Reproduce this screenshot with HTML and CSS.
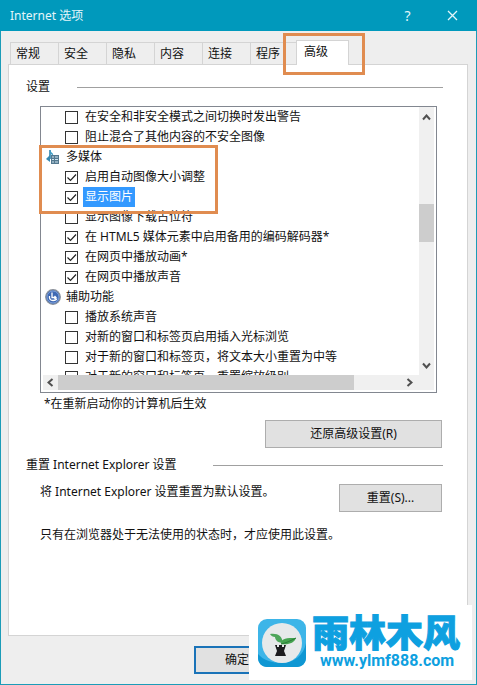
FILE: index.html
```html
<!DOCTYPE html>
<html lang="zh-CN">
<head>
    <meta charset="UTF-8">
    <meta name="viewport" content="width=device-width, initial-scale=1.0">
    <title>Internet 选项</title>
    <link rel="stylesheet" href="styles.css">
</head>
<body>
    <div class="window">
        <header class="titlebar">
            <h1>Internet 选项</h1>
            <button class="title-btn" aria-label="帮助">?</button>
            <button class="title-btn" aria-label="关闭">
                <svg width="11" height="11" viewBox="0 0 11 11"><path d="M1 1l9 9M10 1l-9 9" stroke="#e4f6fa" stroke-width="1.3" fill="none"/></svg>
            </button>
        </header>

        <nav class="tabs" role="tablist">
            <button class="tab" role="tab">常规</button>
            <button class="tab" role="tab">安全</button>
            <button class="tab" role="tab">隐私</button>
            <button class="tab" role="tab">内容</button>
            <button class="tab" role="tab">连接</button>
            <button class="tab" role="tab">程序</button>
            <button class="tab active" role="tab" aria-selected="true">高级</button>
            <span class="mark mark-tab"></span>
        </nav>

        <main class="panel">
            <h2 class="group-title first">设置</h2>

            <div class="listbox">
                <div class="rows">
                    <label class="row"><input type="checkbox"><span>在安全和非安全模式之间切换时发出警告</span></label>
                    <label class="row"><input type="checkbox"><span>阻止混合了其他内容的不安全图像</span></label>
                    <div class="row category">
                        <svg width="14" height="14" viewBox="0 0 14 14">
                            <path d="M4 0v9" stroke="#2b82ad" stroke-width="1.6" fill="none"/>
                            <path d="M4 0c1 3 4 3 3 6-1-2-3-2-3-3z" fill="#3d9cc4"/>
                            <path d="M0 9l4-4v7z" fill="#3487b0"/>
                            <rect x="5" y="5" width="8" height="9" fill="#54788f"/>
                            <path d="M6 7h2M9 7h3M6 9.500h2M9 9.500h3M6 12h2M9 12h3" stroke="#cfe6f2" stroke-width="1.2"/>
                        </svg>
                        <span>多媒体</span>
                    </div>
                    <label class="row"><input type="checkbox" checked><span>启用自动图像大小调整</span></label>
                    <label class="row selected"><input type="checkbox" checked><span>显示图片</span></label>
                    <label class="row"><input type="checkbox"><span>显示图像下载占位符</span></label>
                    <label class="row"><input type="checkbox" checked><span>在 HTML5 媒体元素中启用备用的编码解码器*</span></label>
                    <label class="row"><input type="checkbox" checked><span>在网页中播放动画*</span></label>
                    <label class="row"><input type="checkbox" checked><span>在网页中播放声音</span></label>
                    <div class="row category">
                        <svg width="16" height="16" viewBox="0 0 16 16">
                            <circle cx="8" cy="8" r="7.3" fill="#3f69b3" stroke="#8a9099" stroke-width="1.2"/>
                            <circle cx="8" cy="8" r="6" fill="none" stroke="#8fb0e4" stroke-width=".8"/>
                            <path d="M7 3.500v5h4M9.500 7l1.500 1.500-1.500 1.500M4.500 7c-.5 3 1 4.500 3.500 4.500s3.500-.8 3.800-2" stroke="#fff" stroke-width="1.3" fill="none"/>
                        </svg>
                        <span>辅助功能</span>
                    </div>
                    <label class="row"><input type="checkbox"><span>播放系统声音</span></label>
                    <label class="row"><input type="checkbox"><span>对新的窗口和标签页启用插入光标浏览</span></label>
                    <label class="row"><input type="checkbox"><span>对于新的窗口和标签页，将文本大小重置为中等</span></label>
                    <label class="row"><input type="checkbox"><span>对于新的窗口和标签页，重置缩放级别</span></label>
                </div>
                <div class="vscroll">
                    <button aria-label="向上滚动"><svg width="9" height="7" viewBox="0 0 9 7"><path d="M1 5.500l3.500-4 3.500 4" /></svg></button>
                    <div class="vtrack"><div class="vthumb"></div></div>
                    <button aria-label="向下滚动"><svg width="9" height="7" viewBox="0 0 9 7"><path d="M1 1.500l3.500 4 3.500-4" /></svg></button>
                </div>
                <div class="hscroll">
                    <button aria-label="向左滚动"><svg width="7" height="9" viewBox="0 0 7 9"><path d="M5.500 1l-4 3.500 4 3.500" /></svg></button>
                    <div class="htrack"><div class="hthumb"></div></div>
                    <button aria-label="向右滚动"><svg width="7" height="9" viewBox="0 0 7 9"><path d="M1.500 1l4 3.500-4 3.500" /></svg></button>
                </div>
                <span class="mark mark-rows"></span>
            </div>

            <p class="note">*在重新启动你的计算机后生效</p>
            <div class="restore">
                <button class="btn btn-wide">还原高级设置(R)</button>
            </div>

            <h2 class="group-title second">重置 Internet Explorer 设置</h2>
            <div class="reset">
                <p>将 Internet Explorer 设置重置为默认设置。</p>
                <button class="btn">重置(S)...</button>
            </div>
            <p class="hint">只有在浏览器处于无法使用的状态时，才应使用此设置。</p>
        </main>

        <footer class="actions">
            <button class="btn btn-ok">确定</button>
        </footer>

        <div class="watermark">
            <svg width="48" height="48" viewBox="0 0 48 48">
                <rect width="48" height="48" rx="9" fill="#3db5e8"/>
                <path d="M48 24v15c0 5-4 9-9 9H9c-5 0-9-4-9-9v-4c5 6 14 9 24 9 12 0 22-8 24-20z" fill="#0f97d3"/>
                <circle cx="24" cy="24" r="20" fill="#e6e9ea"/>
                <path d="M12 15c8-1 12 2 13 9-6 0-8-4-8-6-2 0-4-1-5-3z" fill="#4da65a"/>
                <path d="M23 25c0-6 6-6 15-6-2 5-7 7-15 6z" fill="#45a350"/>
                <path d="M23 25c5-1 9-3 15-6" stroke="#2a7a38" stroke-width="1" fill="none"/>
                <path d="M17 26h2v2h2v-2h3v2h2v-2h2l-2 6 2 5H17l2-5z" fill="#1c1c1f"/>
            </svg>
            <div class="brand">
                <strong>雨林木风</strong>
                <span>www.ylmf888.com</span>
            </div>
        </div>
    </div>
</body>
</html>
```
FILE: styles.css
```css
* {
    box-sizing: border-box;
}
body {
    margin: 0;
    font-family: "Noto Sans", "Noto Sans CJK SC", sans-serif;
    font-size: 12px;
    line-height: 20px;
    color: #111;
}
h1, h2, p {
    margin: 0;
    font-size: 12px;
    font-weight: normal;
}
button {
    font: inherit;
    color: inherit;
    padding: 0;
    border: none;
    background: none;
}
.window {
    position: relative;
    display: flex;
    flex-direction: column;
    min-height: 100vh;
    background: #eeeeee;
    border: 1px solid #1b9cb8;
    border-top: none;
}
.titlebar {
    display: flex;
    align-items: center;
    height: 31px;
    margin: 0 -1px;
    padding: 0 2px 0 10px;
    background: #0099bc;
    color: #e4f6fa;
}
.titlebar h1 {
    flex: 1;
}
.title-btn {
    display: flex;
    align-items: center;
    justify-content: center;
    width: 45px;
    height: 31px;
    font-size: 14px;
}

/* tabs */
.tabs {
    position: relative;
    display: flex;
    align-items: flex-end;
    height: 33px;
    padding-left: 9px;
}
.tab {
    width: 48px;
    height: 22px;
    padding-left: 5px;
    text-align: left;
    border-top: 1px solid #d4d4d4;
    border-left: 1px solid #d4d4d4;
}
.tab.active {
    z-index: 1;
    width: 53px;
    height: 25px;
    margin: 0 0 -1px -2px;
    padding: 0 0 2px 7px;
    background: #fff;
    border-right: 1px solid #d4d4d4;
}
.mark {
    position: absolute;
    z-index: 2;
    border: 3px solid #e08c50;
}
.mark-tab {
    left: 282px;
    top: 2px;
    width: 82px;
    height: 42px;
}
.mark-rows {
    left: -2px;
    top: 38px;
    width: 179px;
    height: 69px;
}

.panel {
    flex: 1;
    margin: 0 8px 0 7px;
    padding: 12px 24px 0 17px;
    background: #fff;
    border: 1px solid #d4d4d4;
}
.group-title {
    display: flex;
    align-items: center;
}
.group-title::after {
    content: "";
    flex: 1;
    height: 1px;
    background: #a0a0a0;
}
.first::after {
    margin-left: 27px;
}
.second {
    margin-top: 7px;
}
.second::after {
    margin-left: 36px;
}

/* settings list */
.listbox {
    position: relative;
    display: grid;
    grid-template-columns: 1fr 15px;
    grid-template-rows: 268px 15px;
    margin: 9px 6px 0 14px;
    padding: 0 2px 2px;
    border: 1px solid #828790;
}
.rows {
    overflow: hidden;
}
.row {
    display: flex;
    align-items: center;
    height: 20px;
    padding-left: 22px;
    white-space: nowrap;
}
.row input {
    appearance: none;
    width: 13px;
    height: 13px;
    margin: 0 5px 0 0;
    border: 1px solid #333;
    background: #fff;
}
.row input:checked {
    background: #fff url("data:image/svg+xml,%3Csvg xmlns='http://www.w3.org/2000/svg' viewBox='0 0 11 11'%3E%3Cpath d='M1.5 5.5l3 3 5.5-6' fill='none' stroke='%23222' stroke-width='1.2'/%3E%3C/svg%3E");
}
.row span {
    padding: 0 2px;
}
.selected span {
    background: #3399ff;
    color: #fff;
}
.category {
    gap: 3px;
    padding-left: 2px;
}
.category svg {
    width: 16px;
}
.vscroll {
    display: flex;
    flex-direction: column;
    background: #f0f0f0;
}
.vscroll button, .hscroll button {
    display: flex;
    align-items: center;
    justify-content: center;
    width: 15px;
    height: 20px;
}
.vscroll path, .hscroll path {
    fill: none;
    stroke: #505050;
    stroke-width: 2;
}
.vtrack {
    flex: 1;
    padding-top: 77px;
}
.vthumb {
    height: 38px;
    background: #cdcdcd;
}
.hscroll {
    grid-column: 1 / 3;
    display: flex;
    align-items: center;
    height: 15px;
    padding-right: 17px;
    background: #f0f0f0;
}
.htrack {
    flex: 1;
}
.hthumb {
    width: 86%;
    height: 15px;
    background: #cdcdcd;
}

.note {
    margin: 1px 0 6px 18px;
}
.btn {
    width: 103px;
    height: 28px;
    background: #e1e1e1;
    border: 1px solid #adadad;
}
.btn-wide {
    width: 177px;
}
.restore {
    display: flex;
    justify-content: flex-end;
    padding-right: 1px;
}
.reset {
    display: flex;
    justify-content: space-between;
    margin: 7px 1px 0 14px;
}
.reset .btn {
    margin-top: 2px;
}
.hint {
    margin: 13px 0 0 14px;
}
.actions {
    display: flex;
    height: 48px;
    padding: 10px 0 0 193px;
}
.btn-ok {
    width: 86px;
    border: 2px solid #1a73b8;
}

/* site logo over the lower right corner */
.watermark {
    position: absolute;
    right: 4px;
    bottom: 4px;
    z-index: 3;
    display: flex;
    align-items: center;
    gap: 6px;
    width: 223px;
    height: 75px;
    padding-left: 9px;
    background: #fff;
    color: #0ea0e0;
}
.brand {
    display: flex;
    flex-direction: column;
    gap: 4px;
    padding-bottom: 4px;
}
.brand strong {
    font-family: "Noto Sans CJK SC", sans-serif;
    font-size: 37px;
    font-weight: 900;
    line-height: 36px;
    -webkit-text-stroke: 1px #0ea0e0;
}
.brand span {
    padding-left: 8px;
    font-family: "Liberation Sans Narrow", "Roboto", sans-serif;
    font-size: 16px;
    font-weight: bold;
    line-height: 16px;
}
```
